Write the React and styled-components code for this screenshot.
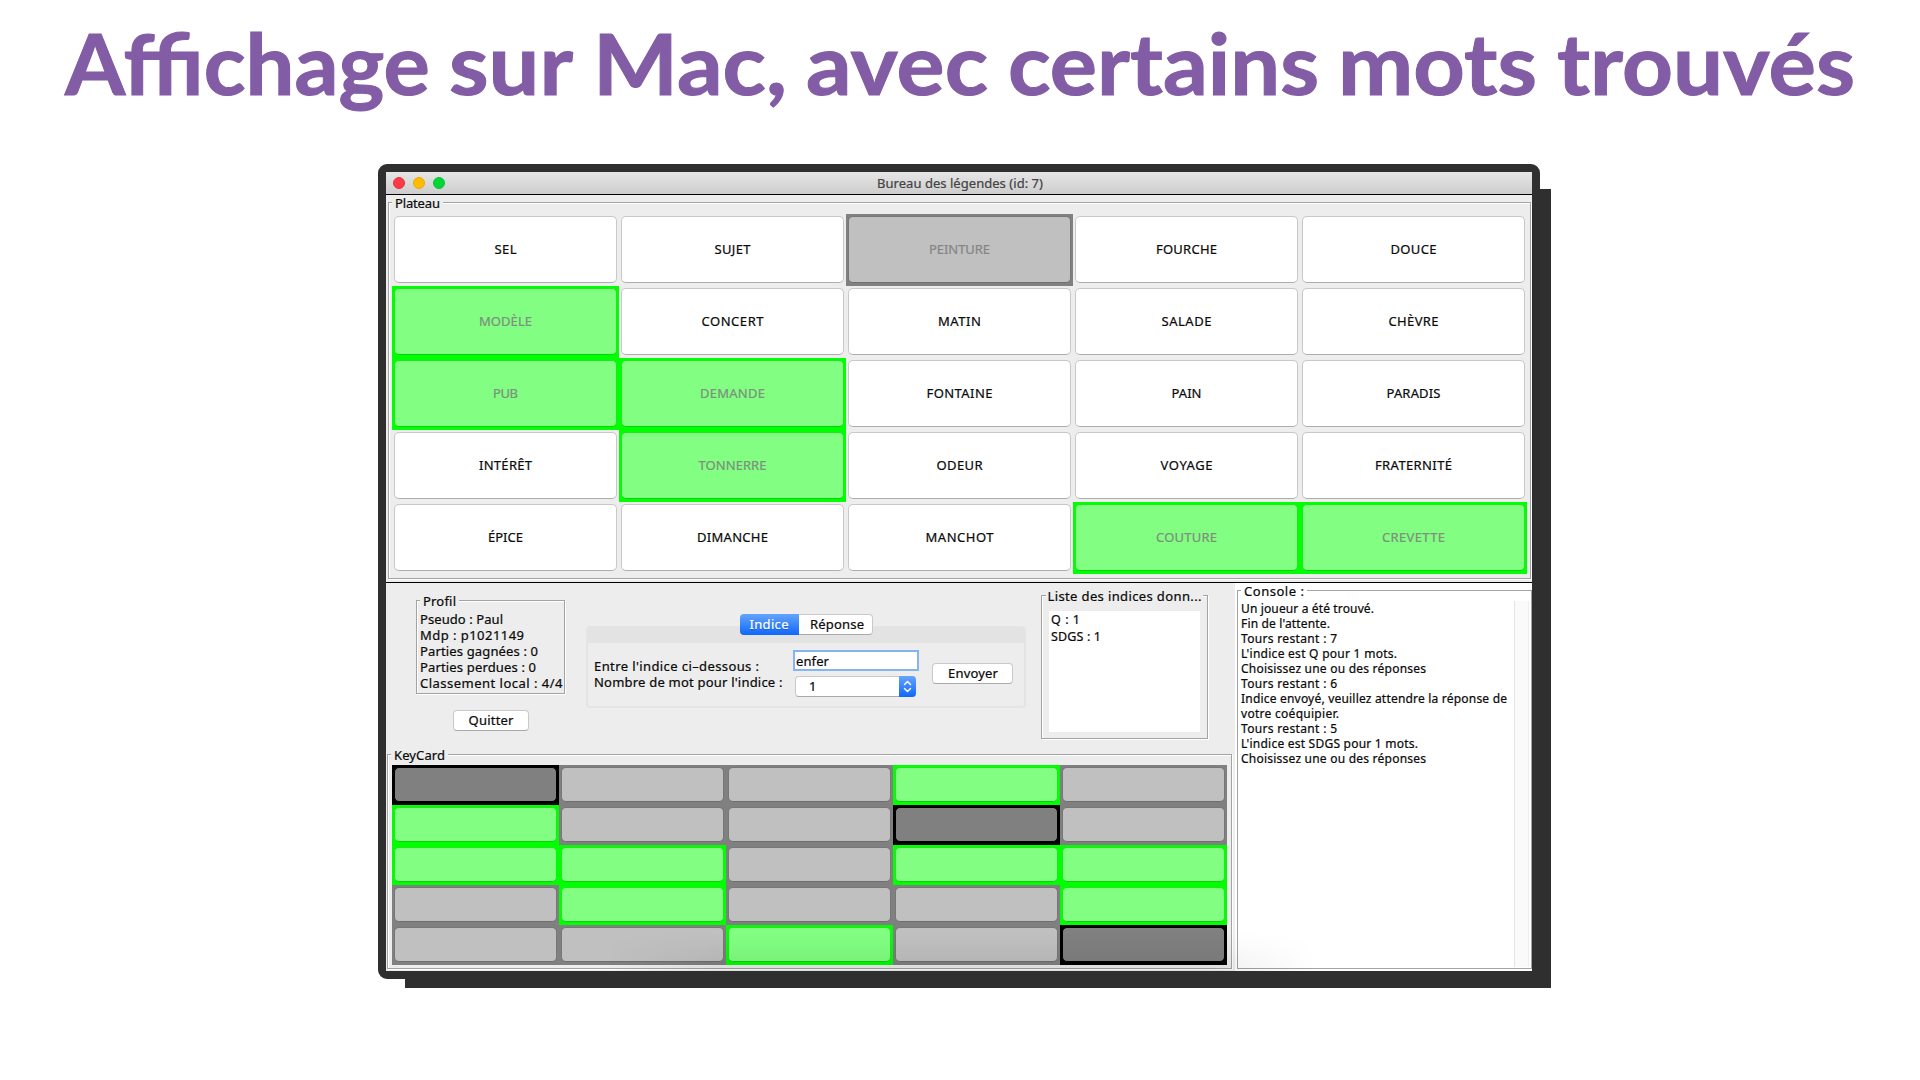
import React, { useLayoutEffect, useRef, useState } from "react";
import styled, { createGlobalStyle, css } from "styled-components";

const Global = createGlobalStyle`
  * { box-sizing: border-box; }
  body { margin: 0; background: #fff; }
`;

const Slide = styled.main`
  width: 1920px;
  height: 1080px;
  overflow: hidden;
  background: #fff;
  font-family: "Noto Sans", "Open Sans", sans-serif;
  font-size: 13px;
  line-height: 16px;
  color: #0a0a0a;
  -webkit-text-stroke: 0.22px;
`;

const Heading = styled.h1`
  margin: 0;
  height: 164px;
  padding: 13px 0 0 65px;
  font: 700 84px/100px Lato, "Open Sans", sans-serif;
  word-spacing: -1px;
  color: #825ca5;
  white-space: nowrap;
  -webkit-text-stroke: 1px;
`;

const Run = styled.span`
  display: inline-block;
  white-space: pre;
  transform-origin: left center;
`;

/* Spreads (or stretches) one line of text over a given width. */
function Fit({ w, stretch, children }) {
  const ref = useRef(null);
  const [fit, setFit] = useState(null);
  useLayoutEffect(() => {
    const natural = ref.current.getBoundingClientRect().width;
    if (stretch) setFit({ transform: `scaleX(${w / natural})`, marginRight: `${w - natural}px` });
    else {
      const gap = (w - natural) / (children.length - 1);
      setFit({ letterSpacing: `${gap}px`, marginRight: `${-gap}px` });
    }
  }, []);
  return <Run ref={ref} style={fit || undefined}>{children}</Run>;
}

const Frame = styled.section`
  width: 1162px;
  height: 815px;
  margin-left: 378px;
  border: 8px solid #2f2f2f;
  border-radius: 9px;
  background: #2f2f2f;
`;

const Win = styled.div`
  position: relative;
  display: flex;
  flex-direction: column;
  width: 1146px;
  height: 799px;
  background: #ededed;
  box-shadow: 19px 17px 0 #2f2f2f;
`;

const TitleBar = styled.header`
  display: grid;
  grid-template-columns: 80px 1fr 80px;
  align-items: center;
  height: 23px;
  padding: 0 5px 1px 7px;
  border-bottom: 1px solid #000;
  background: linear-gradient(#e6e6e6, #cdcdcd);
  color: #444;
`;

const Lights = styled.div`
  display: flex;
  gap: 8px;
`;

const Light = styled.i`
  width: 12px;
  height: 12px;
  border-radius: 50%;
  border: 1px solid ${(p) => p.$edge};
  background: ${(p) => p.$fill};
`;

const WinTitle = styled.div`
  text-align: center;
`;

const Group = styled.div`
  position: relative;
  border: 1px solid #a3a3a3;
  box-shadow: ${(p) => (p.$flat ? "none" : "1px 1px 0 #fff, inset 1px 1px 0 #fff")};
`;

const Legend = styled.div`
  position: absolute;
  top: -8px;
  left: ${(p) => p.$left ?? 3}px;
  padding: 0 ${(p) => p.$pad ?? 3}px;
  height: 16px;
  background: ${(p) => p.$bg || "#ededed"};
  white-space: nowrap;
`;

const BoardArea = styled.div`
  height: 388px;
  padding: 7px 1px 4px 2px;
  border-bottom: 1px solid #000;
`;

const BoardGroup = styled(Group)`
  height: 377px;
  padding: 11px 3px 0 3px;
`;

const Board = styled.div`
  display: grid;
  grid-template-columns: repeat(5, 227px);
  grid-auto-rows: 72px;
`;

const tones = {
  plain: { edge: "transparent", fill: "#fff", line: "#c8c8c8", base: "#aeaeae", text: "#0a0a0a" },
  green: { edge: "#00ff00", fill: "#82ff82", line: "#1fe81f", base: "#10cf10", text: "#7d8f7d" },
  gray: { edge: "#808080", fill: "#c0c0c0", line: "#777", base: "#6e6e6e", text: "#858585" },
  black: { edge: "#000", fill: "#808080", line: "#000", base: "#000", text: "#808080" },
};

const Cell = styled.div`
  display: flex;
  padding: 2px 2px 3px;
  background: ${(p) => tones[p.$tone].edge};
`;

const Word = styled.div`
  flex: 1;
  display: flex;
  align-items: center;
  justify-content: center;
  padding-bottom: 2px;
  border: 1px solid ${(p) => tones[p.$tone].line};
  border-bottom-color: ${(p) => tones[p.$tone].base};
  border-radius: 5px;
  background: ${(p) => tones[p.$tone].fill};
  color: ${(p) => tones[p.$tone].text};
`;

const Lower = styled.div`
  display: flex;
  height: 388px;
`;

const LeftSide = styled.div`
  width: 849px;
  padding-left: 1px;
`;

const Controls = styled.div`
  display: flex;
  height: 171px;
  padding-left: 29px;
`;

const ProfileCol = styled.div`
  width: 149px;
  padding-top: 17px;
  display: flex;
  flex-direction: column;
  align-items: center;
`;

const ProfileBox = styled(Group)`
  width: 149px;
  height: 94px;
  padding: 10px 0 0 3px;
`;

const Line = styled.div`
  height: ${(p) => p.$h || 16}px;
  line-height: ${(p) => p.$h || 16}px;
  white-space: nowrap;
`;

const button = css`
  display: flex;
  align-items: center;
  justify-content: center;
  height: 21px;
  border: 1px solid #c9c9c9;
  border-bottom-color: #aaa;
  border-radius: 4px;
  background: #fff;
`;

const Button = styled.div`
  ${button}
  width: ${(p) => p.$w}px;
  padding: 0 0 1px 1px;
`;

const QuitSlot = styled.div`
  padding-top: 16px;
`;

const TabPane = styled.div`
  width: 440px;
  height: 82px;
  margin: 43px 0 0 21px;
  border: 2px solid #e4e4e4;
  border-top-width: 1px;
  border-radius: 4px;
`;

const TabStrip = styled.div`
  display: flex;
  justify-content: center;
  height: 16px;
  background: #e3e3e3;
`;

const Tabs = styled.div`
  display: flex;
  height: 21px;
  margin-top: -13px;
`;

const Tab = styled.div`
  ${button}
  width: ${(p) => p.$w}px;
  padding: 0 0 1px 4px;
  border-radius: 0 4px 4px 0;
  border-left: 0;
  ${(p) =>
    p.$on &&
    css`
      padding-left: 0;
      border: 0;
      border-radius: 4px 0 0 4px;
      background: linear-gradient(#64a4fb, #0f68fb);
      color: #fff;
      text-shadow: 0 1px 1px rgba(0, 40, 120, 0.4);
    `}
`;

const Form = styled.div`
  display: flex;
  height: 63px;
  padding-left: 6px;
`;

const Labels = styled.div`
  width: 199px;
  padding-top: 15px;
`;

const Fields = styled.div`
  width: 126px;
  padding-top: 7px;
`;

const Input = styled.div`
  height: 21px;
  padding: 0 0 0 1px;
  border: 2px solid #84b5ee;
  background: #fff;
  line-height: 18px;
`;

const Select = styled.div`
  display: flex;
  width: 121px;
  height: 21px;
  margin: 5px 0 0 2px;
  border: 1px solid #c9c9c9;
  border-bottom-color: #aaa;
  border-right: 0;
  border-radius: 4px;
  background: #fff;
`;

const SelectValue = styled.div`
  flex: 1;
  padding-left: 13px;
  line-height: 18px;
`;

const Stepper = styled.div`
  display: flex;
  align-items: center;
  justify-content: center;
  width: 17px;
  height: 21px;
  margin-top: -1px;
  border-radius: 0 4px 4px 0;
  background: linear-gradient(#64a4fb, #0f68fb);
`;

const SendSlot = styled.div`
  padding: 20px 0 0 13px;
`;

const ListBox = styled(Group)`
  width: 167px;
  height: 144px;
  margin: 12px 0 0 15px;
  padding: 15px 0 0 7px;
`;

const List = styled.div`
  width: 151px;
  height: 121px;
  padding: 0 0 0 2px;
  background: #fff;
  font-size: 12.5px;
`;

const KeyGroup = styled(Group)`
  width: 845px;
  height: 215px;
  padding: 10px 0 0 4px;
`;

const Keys = styled.div`
  display: grid;
  grid-template-columns: repeat(5, 167px);
  grid-auto-rows: 40px;
`;

const KeyCell = styled(Cell)``;

const ConsoleSide = styled.div`
  width: 297px;
  padding: 7px 0 2px 2px;
  background: #fff;
`;

const ConsoleGroup = styled(Group)`
  display: flex;
  justify-content: space-between;
  width: 295px;
  height: 379px;
  padding: 10px 2px 1px 3px;
`;

const Log = styled.div`
  font-size: 12px;
`;

const ScrollTrack = styled.div`
  width: 15px;
  border-left: 1px solid #e6e6e6;
  border-right: 1px solid #eee;
  background: #fafafa;
`;

const Shade = styled.div`
  position: absolute;
  left: 220px;
  bottom: 0;
  width: 710px;
  height: 38px;
  background: linear-gradient(transparent, rgba(0, 0, 0, 0.07));
  mask-image: linear-gradient(90deg, transparent, #000 110px, #000 600px, transparent);
  pointer-events: none;
`;

const title = [
  ["Affichage", 365],
  ["sur", 124],
  ["Mac,", 194],
  ["avec", 182],
  ["certains", 311],
  ["mots", 199],
  ["trouvés", 298],
];

const words = [
  ["SEL", 22], ["SUJET", 36], ["PEINTURE", 61, "gray"], ["FOURCHE", 61], ["DOUCE", 46],
  ["MODÈLE", 53, "green"], ["CONCERT", 62], ["MATIN", 43], ["SALADE", 50], ["CHÈVRE", 50],
  ["PUB", 25, "green"], ["DEMANDE", 65, "green"], ["FONTAINE", 66], ["PAIN", 30], ["PARADIS", 54],
  ["INTÉRÊT", 53], ["TONNERRE", 68, "green"], ["ODEUR", 46], ["VOYAGE", 52], ["FRATERNITÉ", 77],
  ["ÉPICE", 35], ["DIMANCHE", 71], ["MANCHOT", 68], ["COUTURE", 61, "green"], ["CREVETTE", 63, "green"],
];

const keyRows = ["KxxGx", "GxxKx", "GGxGG", "xGxxG", "xxGxK"];
const keyTone = { K: "black", x: "gray", G: "green" };

const profile = [
  ["Pseudo : Paul", 83],
  ["Mdp : p1021149", 104],
  ["Parties gagnées : 0", 118],
  ["Parties perdues : 0", 116],
  ["Classement local : 4/4", 142.5],
];

const log = [
  ["Un joueur a été trouvé.", 133],
  ["Fin de l'attente.", 89],
  ["Tours restant : 7", 96],
  ["L'indice est Q pour 1 mots.", 156],
  ["Choisissez une ou des réponses", 185],
  ["Tours restant : 6", 96],
  ["Indice envoyé, veuillez attendre la réponse de", 266],
  ["votre coéquipier.", 98],
  ["Tours restant : 5", 96],
  ["L'indice est SDGS pour 1 mots.", 177],
  ["Choisissez une ou des réponses", 185],
];

export default function App() {
  return (
    <Slide>
      <Global />
      <Heading>
        {title.map(([t, w], i) => (
          <React.Fragment key={t}>
            {i > 0 && " "}
            <Fit w={w} stretch>{t}</Fit>
          </React.Fragment>
        ))}
      </Heading>
      <Frame>
        <Win>
          <TitleBar>
            <Lights>
              <Light $fill="#fc3b47" $edge="#e8303c" />
              <Light $fill="#fdbc02" $edge="#eaab08" />
              <Light $fill="#02d636" $edge="#0bbf38" />
            </Lights>
            <WinTitle><Fit w={166}>Bureau des légendes (id: 7)</Fit></WinTitle>
          </TitleBar>

          <BoardArea>
            <BoardGroup>
              <Legend><Fit w={45}>Plateau</Fit></Legend>
              <Board>
                {words.map(([word, w, tone = "plain"]) => (
                  <Cell key={word} $tone={tone}>
                    <Word $tone={tone}><Fit w={w}>{word}</Fit></Word>
                  </Cell>
                ))}
              </Board>
            </BoardGroup>
          </BoardArea>

          <Lower>
            <LeftSide>
              <Controls>
                <ProfileCol>
                  <ProfileBox>
                    <Legend><Fit w={33}>Profil</Fit></Legend>
                    {profile.map(([t, w]) => <Line key={t}><Fit w={w}>{t}</Fit></Line>)}
                  </ProfileBox>
                  <QuitSlot><Button $w={76}><Fit w={45}>Quitter</Fit></Button></QuitSlot>
                </ProfileCol>

                <TabPane>
                  <TabStrip>
                    <Tabs>
                      <Tab $on $w={59}><Fit w={39}>Indice</Fit></Tab>
                      <Tab $w={74}><Fit w={54}>Réponse</Fit></Tab>
                    </Tabs>
                  </TabStrip>
                  <Form>
                    <Labels>
                      <Line><Fit w={165}>Entre l'indice ci–dessous :</Fit></Line>
                      <Line><Fit w={188.5}>Nombre de mot pour l'indice :</Fit></Line>
                    </Labels>
                    <Fields>
                      <Input><Fit w={33}>enfer</Fit></Input>
                      <Select>
                        <SelectValue>1</SelectValue>
                        <Stepper>
                          <svg width="9" height="13" viewBox="0 0 9 13" fill="none" stroke="#fff" strokeWidth="1.5" strokeLinecap="round" strokeLinejoin="round">
                            <path d="M1.5 4.5 4.5 1.5 7.5 4.5M1.5 8.5 4.5 11.5 7.5 8.5" />
                          </svg>
                        </Stepper>
                      </Select>
                    </Fields>
                    <SendSlot><Button $w={81}><Fit w={50}>Envoyer</Fit></Button></SendSlot>
                  </Form>
                </TabPane>

                <ListBox>
                  <Legend $left={4} $pad={1.5}><Fit w={154}>Liste des indices donn...</Fit></Legend>
                  <List>
                    <Line $h={17}><Fit w={29}>Q : 1</Fit></Line>
                    <Line $h={17}><Fit w={50}>SDGS : 1</Fit></Line>
                  </List>
                </ListBox>
              </Controls>

              <KeyGroup>
                <Legend><Fit w={51}>KeyCard</Fit></Legend>
                <Keys>
                  {keyRows.flatMap((row, r) =>
                    [...row].map((k, c) => (
                      <KeyCell key={`${r}-${c}`} $tone={keyTone[k]}>
                        <Word $tone={keyTone[k]} />
                      </KeyCell>
                    ))
                  )}
                </Keys>
              </KeyGroup>
            </LeftSide>

            <ConsoleSide>
              <ConsoleGroup $flat>
                <Legend $bg="#fff"><Fit w={60}>Console :</Fit></Legend>
                <Log>
                  {log.map(([t, w], i) => <Line key={i} $h={15}><Fit w={w}>{t}</Fit></Line>)}
                </Log>
                <ScrollTrack />
              </ConsoleGroup>
            </ConsoleSide>
          </Lower>
          <Shade />
        </Win>
      </Frame>
    </Slide>
  );
}
